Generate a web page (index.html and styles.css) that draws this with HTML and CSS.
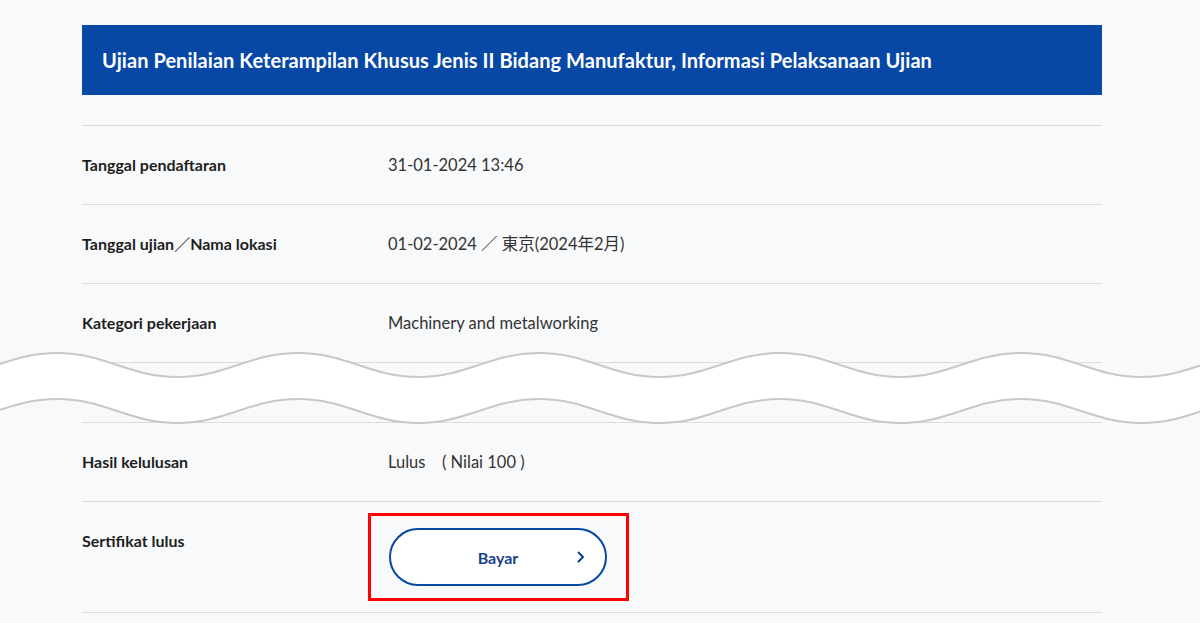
FILE: index.html
```html
<!DOCTYPE html>
<html lang="id">
<head>
  <meta charset="UTF-8">
  <meta name="viewport" content="width=device-width, initial-scale=1.0">
  <title>Informasi Pelaksanaan Ujian</title>
  <link rel="stylesheet" href="styles.css">
</head>
<body>
  <div class="wrap">
    <header class="judul">
      <h1>Ujian Penilaian Keterampilan Khusus Jenis II Bidang Manufaktur, Informasi Pelaksanaan Ujian</h1>
    </header>

    <div class="tabel">
      <div class="baris">
        <div class="label">Tanggal pendaftaran</div>
        <div class="nilai">31-01-2024 13:46</div>
      </div>
      <div class="baris">
        <div class="label">Tanggal ujian／Nama lokasi</div>
        <div class="nilai">01-02-2024 ／ 東京(2024年2月)</div>
      </div>
      <div class="baris">
        <div class="label">Kategori pekerjaan</div>
        <div class="nilai">Machinery and metalworking</div>
      </div>
      <div class="potong"></div>
      <div class="baris">
        <div class="label">Hasil kelulusan</div>
        <div class="nilai">Lulus　( Nilai 100 )</div>
      </div>
      <div class="baris akhir">
        <div class="label">Sertifikat lulus</div>
        <div class="nilai">
          <div class="tanda">
            <button class="bayar">Bayar
              <svg class="panah" width="8" height="12" viewBox="0 0 8 12">
                <path d="M1.5 1.5 L6 6 L1.5 10.5" fill="none" stroke="#0b3e8f" stroke-width="2" stroke-linecap="round" stroke-linejoin="round"/>
              </svg>
            </button>
          </div>
        </div>
      </div>
    </div>
  </div>

  <!-- garis potong (ombak) -->
  <svg class="ombak" width="1200" height="95" viewBox="0 0 1200 95">
    <path fill="#ffffff" d="M-184 13 c48.5 0 72 24 120.5 24 s72 -24 120.5 -24 s72 24 120.5 24 s72 -24 120.5 -24 s72 24 120.5 24 s72 -24 120.5 -24 s72 24 120.5 24 s72 -24 120.5 -24 s72 24 120.5 24 s72 -24 120.5 -24 s72 24 120.5 24 s72 -24 120.5 -24 L1262 59 c-48.5 0 -72 24 -120.5 24 s-72 -24 -120.5 -24 s-72 24 -120.5 24 s-72 -24 -120.5 -24 s-72 24 -120.5 24 s-72 -24 -120.5 -24 s-72 24 -120.5 24 s-72 -24 -120.5 -24 s-72 24 -120.5 24 s-72 -24 -120.5 -24 s-72 24 -120.5 24 s-72 -24 -120.5 -24 Z"/>
    <path fill="none" stroke="#c8c8c8" stroke-width="2" d="M-184 13 c48.5 0 72 24 120.5 24 s72 -24 120.5 -24 s72 24 120.5 24 s72 -24 120.5 -24 s72 24 120.5 24 s72 -24 120.5 -24 s72 24 120.5 24 s72 -24 120.5 -24 s72 24 120.5 24 s72 -24 120.5 -24 s72 24 120.5 24 s72 -24 120.5 -24"/>
    <path fill="none" stroke="#c8c8c8" stroke-width="2" d="M-184 59 c48.5 0 72 24 120.5 24 s72 -24 120.5 -24 s72 24 120.5 24 s72 -24 120.5 -24 s72 24 120.5 24 s72 -24 120.5 -24 s72 24 120.5 24 s72 -24 120.5 -24 s72 24 120.5 24 s72 -24 120.5 -24 s72 24 120.5 24 s72 -24 120.5 -24"/>
  </svg>
</body>
</html>
```

FILE: styles.css
```css
body {
  margin: 0;
  padding: 0;
  background-color: #f8f9fb;
  font-family: 'Lato', 'Noto Sans', 'Noto Sans CJK JP', sans-serif;
  color: #222222;
}

.wrap {
  width: 1020px;
  margin: 25px 0 0 82px;
}

.judul {
  background-color: #0747a6;
  color: #ffffff;
  height: 70px;
  padding: 0 20px;
  display: flex;
  align-items: center;
}

.judul h1 {
  margin: 0;
  font-size: 20px;
  font-weight: 700;
  letter-spacing: 0.05px;
}

.tabel {
  margin-top: 30px;
}

.baris {
  display: flex;
  border-top: 1px solid #dcdcdc;
  padding: 27px 0;
  line-height: 24px;
}

.label {
  width: 306px;
  font-size: 16px;
  font-weight: 700;
  color: #1e1e1e;
}

.nilai {
  font-size: 16.5px;
  color: #333333;
}

.potong {
  border-top: 1px solid #dcdcdc;
  height: 59px;
}

.akhir {
  padding: 11px 0;
  border-bottom: 1px solid #dcdcdc;
}

.akhir .label {
  padding-top: 16px;
}

.tanda {
  margin-left: -20px;
  border: 3px solid #ff0000;
  padding: 12px 19px 12px 18px;
}

.bayar {
  position: relative;
  display: block;
  width: 218px;
  height: 58px;
  background: #ffffff;
  border: 2px solid #0747a6;
  border-radius: 29px;
  font-family: 'Lato', 'Noto Sans', sans-serif;
  font-size: 16px;
  font-weight: 700;
  color: #1b3f8f;
  cursor: pointer;
}

.panah {
  position: absolute;
  right: 20px;
  top: 21px;
}

.ombak {
  position: absolute;
  top: 340px;
  left: 0;
}
```
